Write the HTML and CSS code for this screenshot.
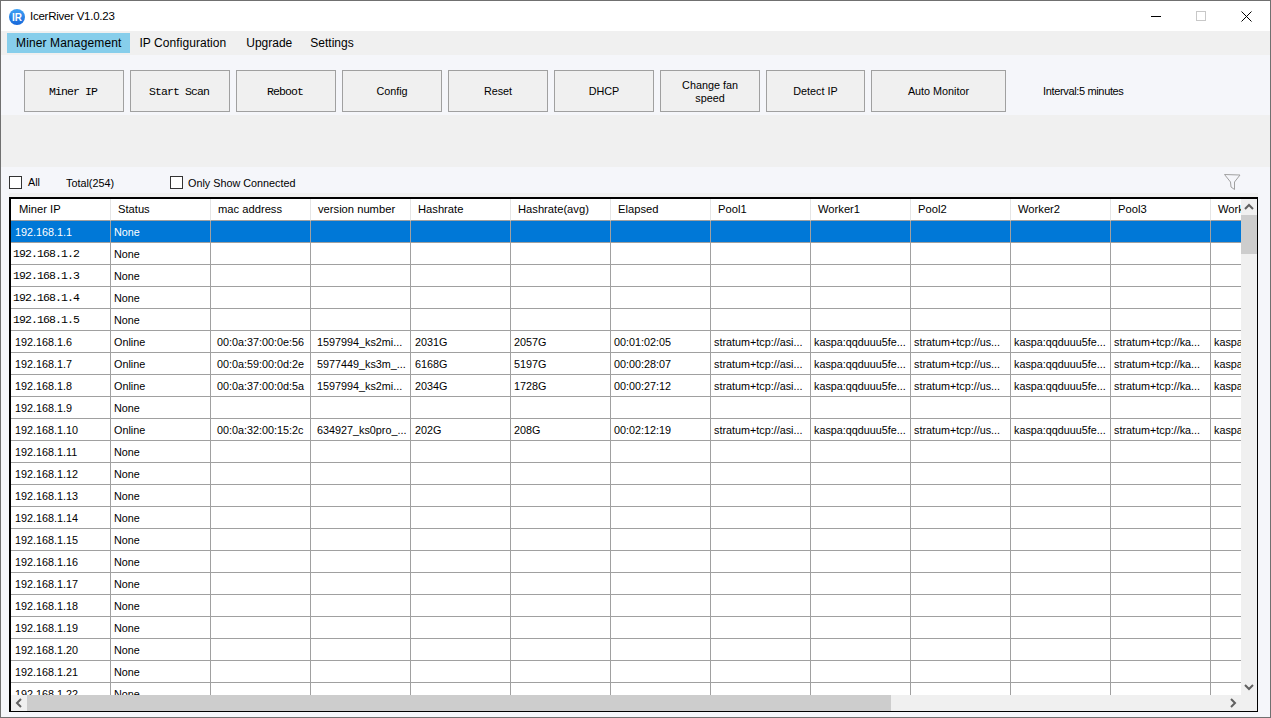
FILE: index.html
```html
<!DOCTYPE html>
<html lang="en">
<head>
  <meta charset="UTF-8">
  <title>IcerRiver V1.0.23</title>
  <link rel="stylesheet" href="styles.css">
</head>
<body>
  <div class="window">
    <div class="titlebar">
      <svg class="logo" width="16" height="16" viewBox="0 0 16 16">
        <defs>
          <linearGradient id="logoBlue" x1="0" y1="0" x2="0" y2="1">
            <stop offset="0" stop-color="#3fa2f5"/>
            <stop offset="1" stop-color="#1667d9"/>
          </linearGradient>
        </defs>
        <circle cx="8" cy="8" r="8" fill="url(#logoBlue)"/>
        <text class="logo-text" x="8" y="11.5" text-anchor="middle">IR</text>
      </svg>
      <span class="title">IcerRiver V1.0.23</span>
      <div class="win-controls">
        <span class="win-btn"><svg width="11" height="11" viewBox="0 0 11 11"><path d="M0 5.5H10" stroke="#000" fill="none"/></svg></span>
        <span class="win-btn max"><svg width="11" height="11" viewBox="0 0 11 11"><rect x="0.5" y="0.5" width="9" height="9" stroke="#c8c8c8" fill="none"/></svg></span>
        <span class="win-btn"><svg width="11" height="11" viewBox="0 0 11 11"><path d="M0.5 0.5L10.5 10.5M10.5 0.5L0.5 10.5" stroke="#000" fill="none"/></svg></span>
      </div>
    </div>

    <div class="menu">
      <span class="menu-item selected">Miner Management</span>
      <span class="menu-item ip-config">IP Configuration</span>
      <span class="menu-item">Upgrade</span>
      <span class="menu-item">Settings</span>
    </div>

    <div class="toolbar">
      <button class="btn mono">Miner IP</button>
      <button class="btn mono">Start Scan</button>
      <button class="btn mono">Reboot</button>
      <button class="btn">Config</button>
      <button class="btn">Reset</button>
      <button class="btn">DHCP</button>
      <button class="btn">Change fan<br>speed</button>
      <button class="btn narrow">Detect IP</button>
      <button class="btn wide">Auto Monitor</button>
      <span class="interval">Interval:5 minutes</span>
    </div>

    <div class="band"></div>

    <div class="filters">
      <span class="checkbox"></span>
      <span class="all-label">All</span>
      <span class="total">Total(254)</span>
      <span class="checkbox"></span>
      <span class="connected-label">Only Show Connected</span>
      <svg class="funnel" width="17" height="17" viewBox="0 0 17 17">
        <path d="M0.5 0.5L16 1L10.5 8V15.5L7 13L6.5 8Z" fill="none" stroke="#a0a0a0"/>
      </svg>
    </div>

    <div class="grid-area">
      <div class="grid-frame">
        <div class="grid-main">
          <div class="grid-view">
            <table class="grid">
              <thead>
                <tr><th>Miner IP</th><th>Status</th><th>mac address</th><th>version number</th><th>Hashrate</th><th>Hashrate(avg)</th><th>Elapsed</th><th>Pool1</th><th>Worker1</th><th>Pool2</th><th>Worker2</th><th>Pool3</th><th>Worker3</th></tr>
              </thead>
              <tbody>
                <tr class="active"><td>192.168.1.1</td><td>None</td><td></td><td></td><td></td><td></td><td></td><td></td><td></td><td></td><td></td><td></td><td></td></tr>
                <tr><td class="ip-mono">192.168.1.2</td><td>None</td><td></td><td></td><td></td><td></td><td></td><td></td><td></td><td></td><td></td><td></td><td></td></tr>
                <tr><td class="ip-mono">192.168.1.3</td><td>None</td><td></td><td></td><td></td><td></td><td></td><td></td><td></td><td></td><td></td><td></td><td></td></tr>
                <tr><td class="ip-mono">192.168.1.4</td><td>None</td><td></td><td></td><td></td><td></td><td></td><td></td><td></td><td></td><td></td><td></td><td></td></tr>
                <tr><td class="ip-mono">192.168.1.5</td><td>None</td><td></td><td></td><td></td><td></td><td></td><td></td><td></td><td></td><td></td><td></td><td></td></tr>
                <tr><td>192.168.1.6</td><td>Online</td><td>00:0a:37:00:0e:56</td><td>1597994_ks2mi...</td><td>2031G</td><td>2057G</td><td>00:01:02:05</td><td>stratum+tcp://asi...</td><td>kaspa:qqduuu5fe...</td><td>stratum+tcp://us...</td><td>kaspa:qqduuu5fe...</td><td>stratum+tcp://ka...</td><td>kaspa:qqduuu5fe...</td></tr>
                <tr><td>192.168.1.7</td><td>Online</td><td>00:0a:59:00:0d:2e</td><td>5977449_ks3m_...</td><td>6168G</td><td>5197G</td><td>00:00:28:07</td><td>stratum+tcp://asi...</td><td>kaspa:qqduuu5fe...</td><td>stratum+tcp://us...</td><td>kaspa:qqduuu5fe...</td><td>stratum+tcp://ka...</td><td>kaspa:qqduuu5fe...</td></tr>
                <tr><td>192.168.1.8</td><td>Online</td><td>00:0a:37:00:0d:5a</td><td>1597994_ks2mi...</td><td>2034G</td><td>1728G</td><td>00:00:27:12</td><td>stratum+tcp://asi...</td><td>kaspa:qqduuu5fe...</td><td>stratum+tcp://us...</td><td>kaspa:qqduuu5fe...</td><td>stratum+tcp://ka...</td><td>kaspa:qqduuu5fe...</td></tr>
                <tr><td>192.168.1.9</td><td>None</td><td></td><td></td><td></td><td></td><td></td><td></td><td></td><td></td><td></td><td></td><td></td></tr>
                <tr><td>192.168.1.10</td><td>Online</td><td>00:0a:32:00:15:2c</td><td>634927_ks0pro_...</td><td>202G</td><td>208G</td><td>00:02:12:19</td><td>stratum+tcp://asi...</td><td>kaspa:qqduuu5fe...</td><td>stratum+tcp://us...</td><td>kaspa:qqduuu5fe...</td><td>stratum+tcp://ka...</td><td>kaspa:qqduuu5fe...</td></tr>
                <tr><td>192.168.1.11</td><td>None</td><td></td><td></td><td></td><td></td><td></td><td></td><td></td><td></td><td></td><td></td><td></td></tr>
                <tr><td>192.168.1.12</td><td>None</td><td></td><td></td><td></td><td></td><td></td><td></td><td></td><td></td><td></td><td></td><td></td></tr>
                <tr><td>192.168.1.13</td><td>None</td><td></td><td></td><td></td><td></td><td></td><td></td><td></td><td></td><td></td><td></td><td></td></tr>
                <tr><td>192.168.1.14</td><td>None</td><td></td><td></td><td></td><td></td><td></td><td></td><td></td><td></td><td></td><td></td><td></td></tr>
                <tr><td>192.168.1.15</td><td>None</td><td></td><td></td><td></td><td></td><td></td><td></td><td></td><td></td><td></td><td></td><td></td></tr>
                <tr><td>192.168.1.16</td><td>None</td><td></td><td></td><td></td><td></td><td></td><td></td><td></td><td></td><td></td><td></td><td></td></tr>
                <tr><td>192.168.1.17</td><td>None</td><td></td><td></td><td></td><td></td><td></td><td></td><td></td><td></td><td></td><td></td><td></td></tr>
                <tr><td>192.168.1.18</td><td>None</td><td></td><td></td><td></td><td></td><td></td><td></td><td></td><td></td><td></td><td></td><td></td></tr>
                <tr><td>192.168.1.19</td><td>None</td><td></td><td></td><td></td><td></td><td></td><td></td><td></td><td></td><td></td><td></td><td></td></tr>
                <tr><td>192.168.1.20</td><td>None</td><td></td><td></td><td></td><td></td><td></td><td></td><td></td><td></td><td></td><td></td><td></td></tr>
                <tr><td>192.168.1.21</td><td>None</td><td></td><td></td><td></td><td></td><td></td><td></td><td></td><td></td><td></td><td></td><td></td></tr>
                <tr><td>192.168.1.22</td><td>None</td><td></td><td></td><td></td><td></td><td></td><td></td><td></td><td></td><td></td><td></td><td></td></tr>
              </tbody>
            </table>
          </div>
          <div class="vscroll">
            <svg class="arrow" width="16" height="16" viewBox="0 0 16 16"><path d="M4 10L8 6L12 10" fill="none" stroke="#606060" stroke-width="2"/></svg>
            <div class="vthumb"></div>
            <div class="spacer"></div>
            <svg class="arrow" width="16" height="16" viewBox="0 0 16 16"><path d="M4 6L8 10L12 6" fill="none" stroke="#606060" stroke-width="2"/></svg>
          </div>
        </div>
        <div class="hscroll">
          <svg class="arrow" width="16" height="16" viewBox="0 0 16 16"><path d="M10 4L6 8L10 12" fill="none" stroke="#606060" stroke-width="2"/></svg>
          <div class="hthumb"></div>
          <div class="spacer"></div>
          <svg class="arrow" width="16" height="16" viewBox="0 0 16 16"><path d="M6 4L10 8L6 12" fill="none" stroke="#606060" stroke-width="2"/></svg>
          <div class="corner"></div>
        </div>
      </div>
    </div>
  </div>
</body>
</html>
```

FILE: styles.css
```css
html, body {
  margin: 0;
  padding: 0;
  width: 100%;
  height: 100%;
  overflow: hidden;
  background: #fff;
  font-family: 'Liberation Sans', sans-serif;
  font-size: 10.8px;
  color: #000;
}
.window {
  box-sizing: border-box;
  width: 1271px;
  height: 718px;
  border: 1px solid #707070;
  background: #f5f6fa;
  display: flex;
  flex-direction: column;
}
.titlebar {
  height: 30px;
  background: #fff;
  display: flex;
  align-items: center;
  flex: none;
}
.logo {
  margin-left: 8px;
  margin-top: 1px;
}
.logo-text {
  font-family: 'Liberation Sans', sans-serif;
  font-size: 10px;
  font-weight: bold;
  fill: #fff;
}
.title {
  margin-left: 5px;
  font-size: 11.5px;
  letter-spacing: -0.25px;
}
.win-controls {
  margin-left: auto;
  display: flex;
}
.win-btn {
  width: 48px;
  height: 30px;
  display: flex;
  align-items: center;
  justify-content: center;
}
.win-btn.max {
  width: 42px;
}
.menu {
  height: 24px;
  flex: none;
  background: #f0f0f0;
  display: flex;
  align-items: center;
  padding-left: 6px;
  font-size: 12px;
}
.menu-item {
  height: 20px;
  line-height: 20px;
  padding: 0 9px;
}
.menu-item.selected {
  background: #87ceeb;
  letter-spacing: 0.13px;
}
.menu-item.ip-config {
  letter-spacing: 0.06px;
  padding-right: 11px;
}
.toolbar {
  height: 60px;
  flex: none;
  box-sizing: border-box;
  padding: 15px 0 3px 23px;
  display: flex;
  gap: 6px;
}
.btn {
  width: 100px;
  height: 42px;
  box-sizing: border-box;
  border: 1px solid #a0a0a0;
  background: #f0f0f0;
  font-family: 'Liberation Sans', sans-serif;
  font-size: 10.8px;
  line-height: 13px;
  color: #000;
  padding: 1px 0 0;
}
.btn.mono {
  font-family: 'Liberation Mono', monospace;
  font-size: 11.5px;
  letter-spacing: -0.9px;
  padding: 0 2px 0 0;
}
.btn.narrow {
  width: 99px;
}
.btn.wide {
  width: 135px;
}
.interval {
  margin-left: 31px;
  line-height: 43px;
  font-size: 11px;
  letter-spacing: -0.35px;
}
.band {
  height: 52px;
  flex: none;
  background: #f0f0f0;
}
.filters {
  height: 26px;
  flex: none;
  display: flex;
  align-items: center;
  padding-left: 8px;
}
.checkbox {
  width: 11px;
  height: 11px;
  border: 1px solid #333;
  background: #fff;
  flex: none;
  margin-top: 4px;
}
.all-label {
  width: 38px;
  margin-left: 6px;
  margin-top: 3px;
}
.total {
  width: 104px;
  margin-top: 6px;
}
.connected-label {
  margin-left: 5px;
  margin-top: 6px;
}
.funnel {
  margin-left: auto;
  margin-right: 29px;
  margin-top: 4px;
}
.grid-area {
  flex: 1;
  min-height: 0;
  margin: 0 12px 5px 8px;
  padding-top: 4px;
  background: #f0f0f0;
  display: flex;
}
.grid-frame {
  flex: 1;
  min-width: 0;
  border-top: 2px solid #000;
  border-left: 2px solid #000;
  border-right: 1px solid #000;
  border-bottom: 1px solid #000;
  display: flex;
  flex-direction: column;
}
.grid-main {
  flex: 1;
  min-height: 0;
  display: flex;
}
.grid-view {
  flex: 1;
  min-width: 0;
  overflow: hidden;
  background: #fff;
}
.grid {
  table-layout: fixed;
  width: 1300px;
  border-collapse: separate;
  border-spacing: 0;
}
.grid th, .grid td {
  box-sizing: border-box;
  width: 100px;
  height: 22px;
  padding: 0 0 0 3px;
  border-right: 1px solid #a0a0a0;
  border-bottom: 1px solid #a0a0a0;
  font-weight: normal;
  text-align: left;
  white-space: nowrap;
  overflow: hidden;
}
.grid th {
  padding: 0 0 2px 7px;
  font-size: 11.2px;
  border-right-color: #e5e5e5;
}
.grid th:first-child {
  padding-left: 8px;
}
.grid td:first-child {
  padding-left: 4px;
}
.grid td:nth-child(3), .grid td:nth-child(4) {
  padding-left: 6px;
}
.grid td:nth-child(5) {
  padding-left: 4px;
}
.grid td.ip-mono {
  font-family: 'Liberation Mono', monospace;
  font-size: 11.5px;
  letter-spacing: -0.9px;
  padding: 0 0 0 2px;
}
.grid tr.active td {
  background: #0078d7;
  color: #fff;
}
.vscroll {
  width: 16px;
  flex: none;
  background: #f0f0f0;
  display: flex;
  flex-direction: column;
}
.vthumb {
  height: 39px;
  background: #cdcdcd;
  flex: none;
}
.hscroll {
  height: 16px;
  flex: none;
  background: #f0f0f0;
  display: flex;
}
.hthumb {
  width: 864px;
  background: #cdcdcd;
  flex: none;
}
.spacer {
  flex: 1;
}
.arrow {
  flex: none;
  display: block;
}
.corner {
  width: 16px;
  flex: none;
}
```
